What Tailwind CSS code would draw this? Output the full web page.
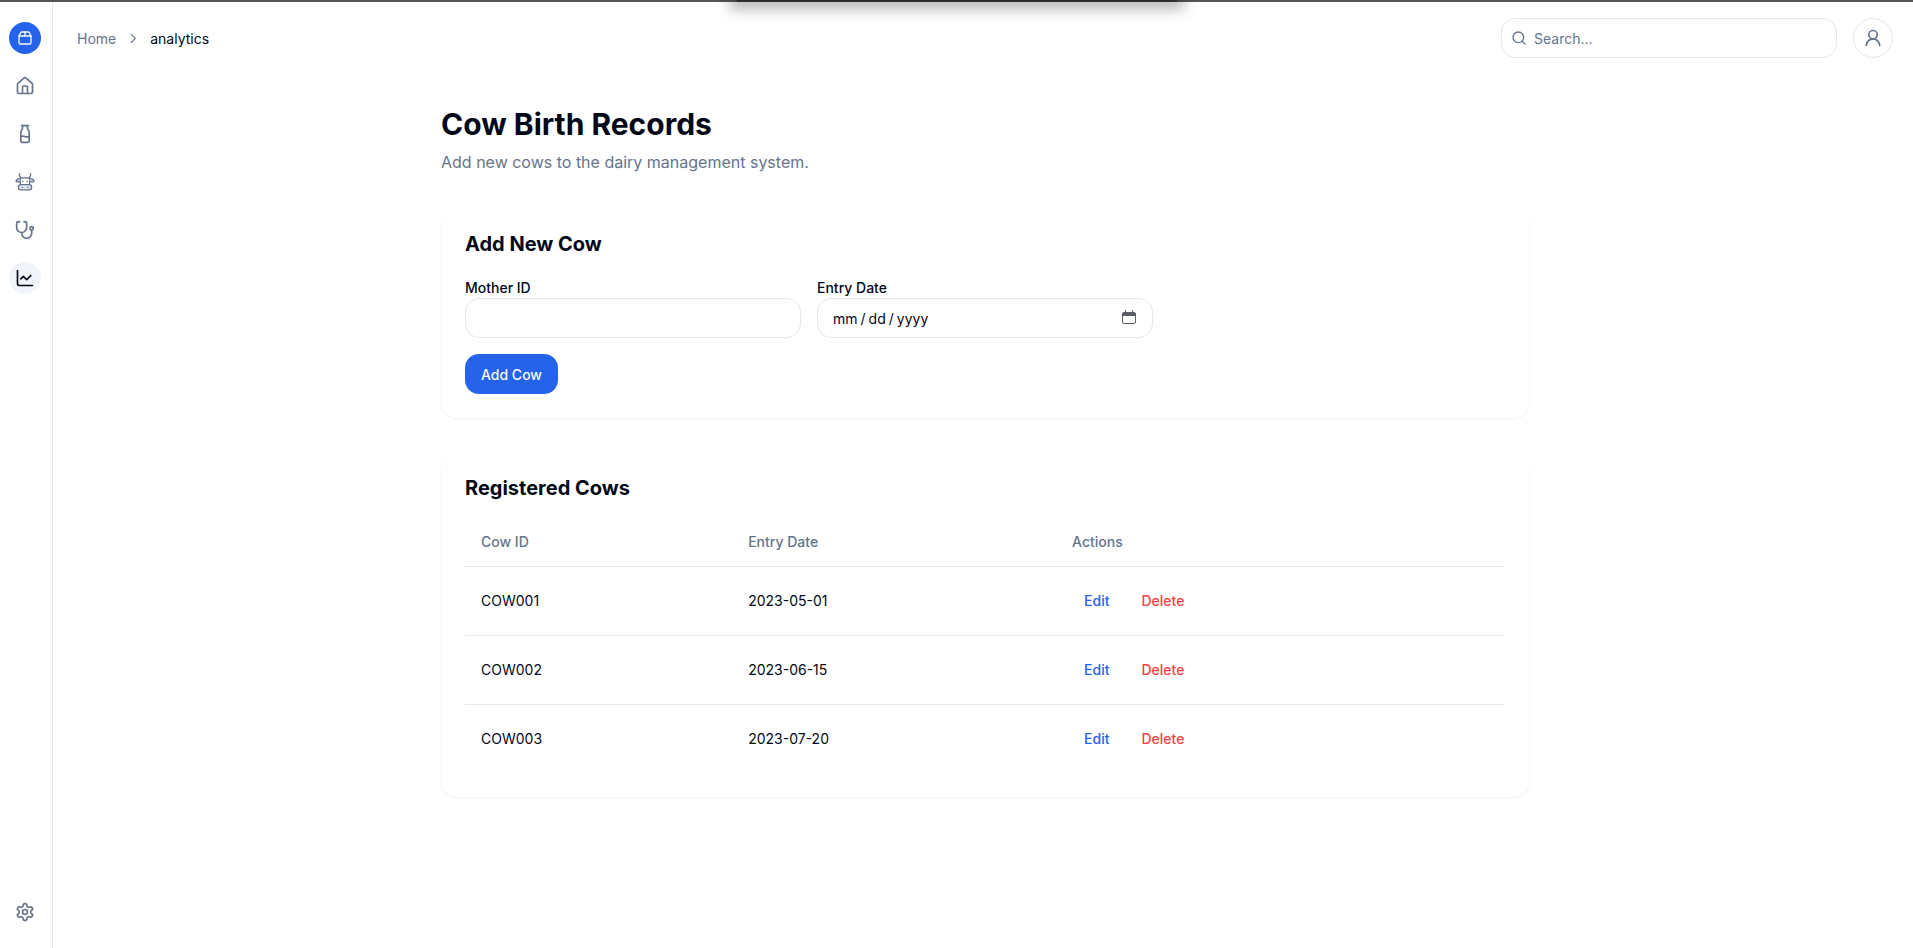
<!DOCTYPE html>
<html lang="en">
<head>
<meta charset="utf-8">
<meta name="viewport" content="width=device-width, initial-scale=1">
<title>Cow Birth Records</title>
<script src="https://cdn.jsdelivr.net/npm/@tailwindcss/browser@4"></script>
</head>
<body class="relative flex min-h-screen overflow-x-hidden bg-white font-['Inter',sans-serif] text-[#020817]">
  <div class="absolute inset-x-0 top-0 h-0.5 bg-[#555354]"></div>
  <div class="absolute inset-x-0 top-0 flex h-8 justify-center overflow-hidden">
    <div class="h-0.5 w-[440px] bg-[#2d2d2f] shadow-[0_0_14px_7px_rgba(0,0,0,0.3)]"></div>
  </div>

  <aside class="flex w-[53px] shrink-0 flex-col justify-between border-r border-[#e2e8f0] pt-[22px] pr-0.5 pb-5">
    <nav class="flex flex-col items-center gap-4" aria-label="Main">
      <a href="#" aria-label="Dairy management" class="flex size-8 items-center justify-center rounded-full bg-[#2563eb] text-slate-50">
        <svg class="size-4" viewBox="0 0 24 24" fill="none" stroke="currentColor" stroke-width="2" stroke-linecap="round" stroke-linejoin="round"><path d="M3 9h18v10a2 2 0 0 1-2 2H5a2 2 0 0 1-2-2V9Z"/><path d="m3 9 2.45-4.9A2 2 0 0 1 7.24 3h9.52a2 2 0 0 1 1.8 1.1L21 9"/><path d="M12 3v6"/></svg>
      </a>
      <a href="#" aria-label="Home" class="flex size-8 items-center justify-center rounded-full text-[#64748b]">
        <svg class="size-5" viewBox="0 0 24 24" fill="none" stroke="currentColor" stroke-width="2" stroke-linecap="round" stroke-linejoin="round"><path d="M15 21v-8a1 1 0 0 0-1-1h-4a1 1 0 0 0-1 1v8"/><path d="M3 10a2 2 0 0 1 .709-1.528l7-5.999a2 2 0 0 1 2.582 0l7 5.999A2 2 0 0 1 21 10v9a2 2 0 0 1-2 2H5a2 2 0 0 1-2-2z"/></svg>
      </a>
      <a href="#" aria-label="Milk" class="flex size-8 items-center justify-center rounded-full text-[#64748b]">
        <svg class="size-5" viewBox="0 0 24 24" fill="none" stroke="currentColor" stroke-width="2" stroke-linecap="round" stroke-linejoin="round"><path d="M8 2h8"/><path d="M9 2v2.789a4 4 0 0 1-.672 2.219l-.656.984A4 4 0 0 0 7 10.212V20a2 2 0 0 0 2 2h6a2 2 0 0 0 2-2v-9.789a4 4 0 0 0-.672-2.219l-.656-.984A4 4 0 0 1 15 4.788V2"/><path d="M7 15a6.472 6.472 0 0 1 5 0 6.47 6.47 0 0 0 5 0"/></svg>
      </a>
      <a href="#" aria-label="Cows" class="flex size-8 items-center justify-center rounded-full text-[#64748b]">
        <svg class="size-5" viewBox="0 0 24 24" fill="none" stroke="currentColor" stroke-width="1.5" stroke-linecap="round" stroke-linejoin="round"><path d="M6.500 7h11v8h-11z"/><path d="M5.200 2c-.2 2.500 .5 4 2.300 5M18.800 2c.2 2.500-.5 4-2.300 5"/><path d="M6.500 8C4 7.500 2 8.500 1.200 11c2 1.500 3.800 1 5.300 0M17.500 8c2.500-.5 4.500 .5 5.300 3-2 1.500-3.800 1-5.300 0" fill="#cbd5e1"/><rect x="4" y="15" width="16" height="6.500" rx="3.200" fill="#e2e8f0"/><path d="M9.300 11v.5M14.700 11v.5M8.500 18.300h.5M15 18.300h.5"/></svg>
      </a>
      <a href="#" aria-label="Health" class="flex size-8 items-center justify-center rounded-full text-[#64748b]">
        <svg class="size-5" viewBox="0 0 24 24" fill="none" stroke="currentColor" stroke-width="2" stroke-linecap="round" stroke-linejoin="round"><path d="M4.800 2.300A.3.3 0 1 0 5 2H4a2 2 0 0 0-2 2v5a6 6 0 0 0 6 6a6 6 0 0 0 6-6V4a2 2 0 0 0-2-2h-1a.2.2 0 1 0 .3.3"/><path d="M8 15v1a6 6 0 0 0 6 6a6 6 0 0 0 6-6v-4"/><circle cx="20" cy="10" r="2"/></svg>
      </a>
      <a href="#" aria-label="Analytics" aria-current="page" class="flex size-8 items-center justify-center rounded-full bg-slate-100 text-[#020817]">
        <svg class="size-5" viewBox="0 0 24 24" fill="none" stroke="currentColor" stroke-width="2" stroke-linecap="round" stroke-linejoin="round"><path d="M3 3v16a2 2 0 0 0 2 2h16"/><path d="m19 9-5 5-4-4-3 3"/></svg>
      </a>
    </nav>
    <nav class="flex flex-col items-center" aria-label="Secondary">
      <a href="#" aria-label="Settings" class="flex size-8 items-center justify-center rounded-full text-[#64748b]">
        <svg class="size-5" viewBox="0 0 24 24" fill="none" stroke="currentColor" stroke-width="2" stroke-linecap="round" stroke-linejoin="round"><path d="M12.220 2h-.44a2 2 0 0 0-2 2v.18a2 2 0 0 1-1 1.730l-.43.25a2 2 0 0 1-2 0l-.15-.08a2 2 0 0 0-2.730.73l-.22.38a2 2 0 0 0 .73 2.730l.15.1a2 2 0 0 1 1 1.720v.51a2 2 0 0 1-1 1.740l-.15.09a2 2 0 0 0-.73 2.730l.22.38a2 2 0 0 0 2.730.73l.15-.08a2 2 0 0 1 2 0l.43.25a2 2 0 0 1 1 1.730V20a2 2 0 0 0 2 2h.44a2 2 0 0 0 2-2v-.18a2 2 0 0 1 1-1.730l.43-.25a2 2 0 0 1 2 0l.15.08a2 2 0 0 0 2.730-.73l.22-.39a2 2 0 0 0-.73-2.730l-.15-.08a2 2 0 0 1-1-1.740v-.5a2 2 0 0 1 1-1.740l.15-.09a2 2 0 0 0 .73-2.730l-.22-.38a2 2 0 0 0-2.730-.73l-.15.08a2 2 0 0 1-2 0l-.43-.25a2 2 0 0 1-1-1.730V4a2 2 0 0 0-2-2z"/><circle cx="12" cy="12" r="3"/></svg>
      </a>
    </nav>
  </aside>

  <div class="flex min-w-0 flex-1 flex-col">
    <header class="flex items-center gap-4 pt-[18px] pr-5 pl-6">
      <nav aria-label="Breadcrumb" class="mr-auto pt-0.5">
        <ol class="flex items-center gap-2.5 text-sm">
          <li><a href="#" class="text-[#64748b]">Home</a></li>
          <li aria-hidden="true"><svg class="size-3.5 text-[#64748b]" viewBox="0 0 24 24" fill="none" stroke="currentColor" stroke-width="2" stroke-linecap="round" stroke-linejoin="round"><path d="m9 18 7-7-7-7"/></svg></li>
          <li aria-current="page">analytics</li>
        </ol>
      </nav>
      <div class="relative">
        <svg class="absolute top-3 left-2.5 size-4 text-[#64748b]" viewBox="0 0 24 24" fill="none" stroke="currentColor" stroke-width="2" stroke-linecap="round" stroke-linejoin="round"><circle cx="11" cy="11" r="8"/><path d="m21 21-4.300-4.300"/></svg>
        <input type="search" aria-label="Search" placeholder="Search..." class="h-10 w-[336px] rounded-[14px] border border-[#e2e8f0] pr-3 pl-8 text-sm placeholder:text-[#64748b]">
      </div>
      <button type="button" aria-label="Account" class="flex size-10 items-center justify-center rounded-full border border-[#e2e8f0] text-[#64748b]">
        <svg class="size-5" viewBox="0 0 24 24" fill="none" stroke="currentColor" stroke-width="2" stroke-linecap="round" stroke-linejoin="round"><circle cx="12" cy="8" r="5"/><path d="M20 21a8 8 0 0 0-16 0"/></svg>
      </button>
    </header>

    <main class="flex-1 pt-12 pl-1">
      <div class="mx-auto flex max-w-6xl flex-col gap-8 px-8">
        <div class="flex flex-col gap-2">
          <h1 class="text-3xl font-bold">Cow Birth Records</h1>
          <p class="text-base text-[#64748b]">Add new cows to the dairy management system.</p>
        </div>

        <section class="rounded-2xl p-6 shadow-sm shadow-black/5">
          <h2 class="mb-4 text-xl font-bold">Add New Cow</h2>
          <form class="flex flex-col items-start gap-4">
            <div class="grid w-full grid-cols-3 gap-4">
              <div class="flex flex-col">
                <label for="mother" class="pt-1 text-sm font-medium">Mother ID</label>
                <input id="mother" type="text" class="h-10 w-full rounded-[14px] border border-[#e2e8f0] px-4 text-sm">
              </div>
              <div class="flex flex-col">
                <label for="entry" class="pt-1 text-sm font-medium">Entry Date</label>
                <div class="relative">
                  <input id="entry" type="date" class="h-10 w-full rounded-[14px] border border-[#e2e8f0] px-3.5 pt-0.5 text-sm [&::-webkit-calendar-picker-indicator]:opacity-0 [&::-webkit-datetime-edit-text]:px-0.5">
                  <svg class="pointer-events-none absolute top-3 right-4 size-4 text-[#5a5d66]" viewBox="0 0 16 16" fill="none" stroke="currentColor"><rect x="1.500" y="2.500" width="13" height="11" rx="1.500"/><path d="M1.500 3.500h13v2h-13z" fill="currentColor"/><path d="M4.500 0v3M11.500 0v3"/></svg>
                </div>
              </div>
            </div>
            <button type="button" class="h-10 rounded-[14px] bg-[#2563eb] px-4 pt-0.5 text-sm font-medium text-slate-50">Add Cow</button>
          </form>
        </section>

        <section class="rounded-2xl p-6 shadow-sm shadow-black/5">
          <h2 class="mb-4 text-xl font-bold">Registered Cows</h2>
          <table class="w-full text-sm">
            <thead>
              <tr class="border-b border-[#e2e8f0] text-left text-[#64748b]">
                <th class="h-12 px-4 font-medium">Cow ID</th>
                <th class="h-12 px-4 font-medium">Entry Date</th>
                <th class="h-12 px-4 font-medium">Actions</th>
              </tr>
            </thead>
            <tbody>
              <tr class="border-b border-[#e2e8f0]">
                <td class="p-4">COW001</td>
                <td class="p-4">2023-05-01</td>
                <td class="p-4"><div class="flex gap-2"><button type="button" class="h-9 px-3 font-medium text-[#2563eb]">Edit</button><button type="button" class="h-9 px-3 font-medium text-[#ef4444]">Delete</button></div></td>
              </tr>
              <tr class="border-b border-[#e2e8f0]">
                <td class="p-4">COW002</td>
                <td class="p-4">2023-06-15</td>
                <td class="p-4"><div class="flex gap-2"><button type="button" class="h-9 px-3 font-medium text-[#2563eb]">Edit</button><button type="button" class="h-9 px-3 font-medium text-[#ef4444]">Delete</button></div></td>
              </tr>
              <tr>
                <td class="p-4">COW003</td>
                <td class="p-4">2023-07-20</td>
                <td class="p-4"><div class="flex gap-2"><button type="button" class="h-9 px-3 font-medium text-[#2563eb]">Edit</button><button type="button" class="h-9 px-3 font-medium text-[#ef4444]">Delete</button></div></td>
              </tr>
            </tbody>
          </table>
        </section>
      </div>
    </main>
  </div>
</body>
</html>
